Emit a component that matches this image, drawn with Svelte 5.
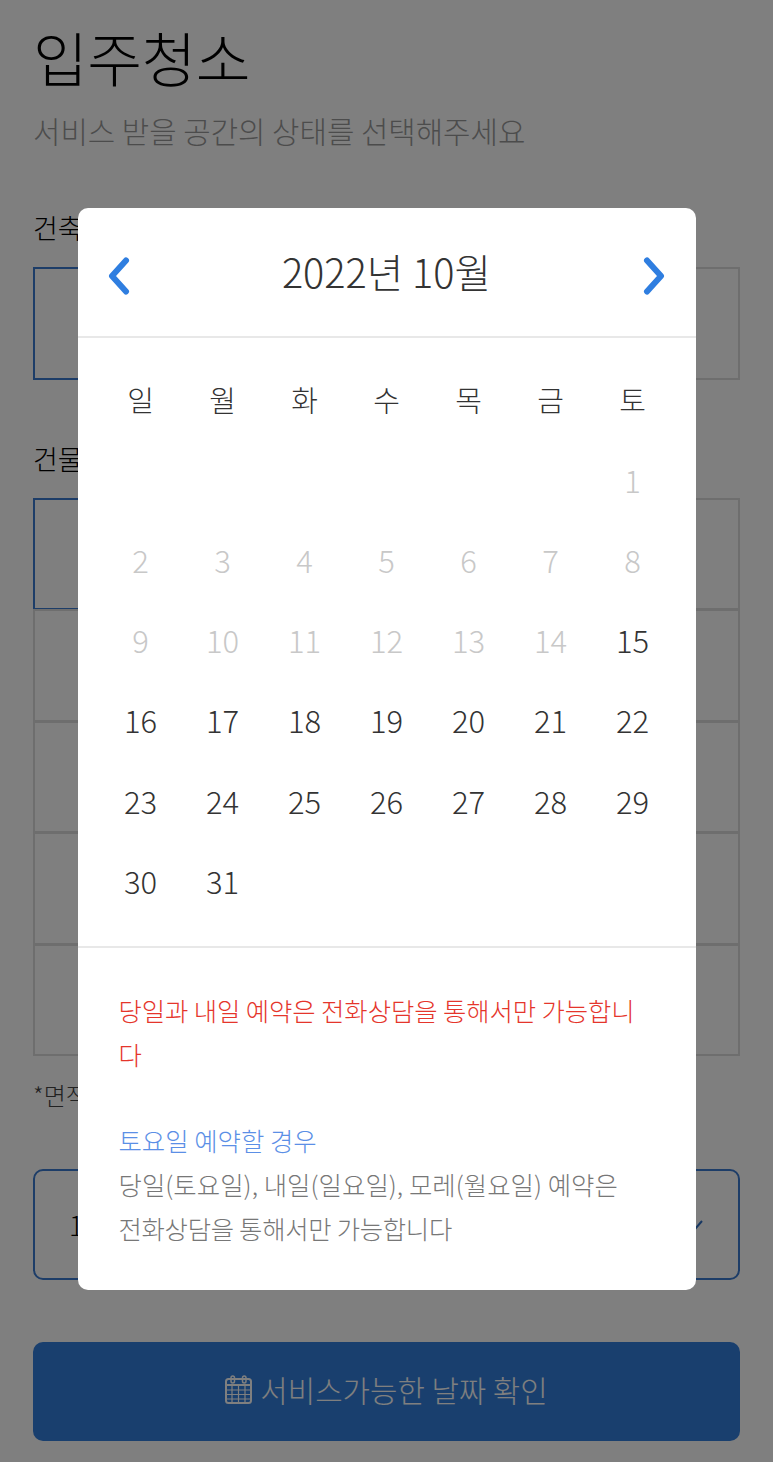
<script>
  const weekdays = ['일', '월', '화', '수', '목', '금', '토'];
  const blanks = Array(6);
  const days = Array.from({ length: 31 }, (_, i) => i + 1);
  const rows = [0, 1, 2, 3, 4];
</script>

<div class="page">
  <h1>입주청소</h1>
  <p class="sub">서비스 받을 공간의 상태를 선택해주세요</p>

  <div class="label first">건축물 유형</div>
  <div class="options single">
    <div class="opt selected">아파트</div>
    <div class="opt">주택</div>
  </div>

  <div class="label second">건물 상태</div>
  <div class="options">
    {#each rows as r}
      <div class="opt" class:selected={r === 0}></div>
      <div class="opt"></div>
    {/each}
  </div>

  <div class="note">*면적은 공급면적 기준입니다</div>

  <div class="select">
    <span>10평</span>
    <svg class="caret" width="16" height="12" viewBox="0 0 16 12"><path d="M2 3l6 7 6-7" fill="none" stroke="#2f6fc4" stroke-width="2"/></svg>
  </div>

  <button class="cta">
    <svg width="27" height="29" viewBox="0 0 27 29">
      <rect x="1" y="4" width="25" height="24" rx="2.500" fill="none" stroke="currentColor" stroke-width="2"/>
      <path d="M1 10h25" stroke="currentColor" stroke-width="2"/>
      <path d="M1 15h25M1 19.500h25M1 24h25M7 10v18M13.500 10v18M20 10v18" stroke="currentColor" stroke-width="1.200"/>
      <rect x="6" y="1" width="3.500" height="7" rx="1.750" fill="none" stroke="currentColor" stroke-width="1.500"/>
      <rect x="17.500" y="1" width="3.500" height="7" rx="1.750" fill="none" stroke="currentColor" stroke-width="1.500"/>
    </svg>
    서비스가능한 날짜 확인
  </button>
</div>

<div class="overlay">
  <div class="modal">
    <header>
      <svg class="nav" width="26" height="38" viewBox="0 0 26 38"><path d="M20 3.500L6 19l14 15.500" fill="none" stroke="#2f7ee0" stroke-width="6" stroke-linecap="round" stroke-linejoin="round"/></svg>
      <span class="month">2022년 10월</span>
      <svg class="nav" width="26" height="38" viewBox="0 0 26 38"><path d="M6 3.500L20 19 6 34.500" fill="none" stroke="#2f7ee0" stroke-width="6" stroke-linecap="round" stroke-linejoin="round"/></svg>
    </header>
    <div class="cal">
      {#each weekdays as w}<div class="cell wd">{w}</div>{/each}
      {#each blanks as _}<div class="cell"></div>{/each}
      {#each days as d}<div class="cell" class:off={d < 15}>{d}</div>{/each}
    </div>
    <div class="info">
      <p class="red">당일과 내일 예약은 전화상담을 통해서만 가능합니다</p>
      <p class="blue">토요일 예약할 경우</p>
      <p class="gray">당일(토요일), 내일(일요일), 모레(월요일) 예약은<br /><span class="tight">전화상담을 통해서만 가능합니다</span></p>
    </div>
  </div>
</div>

<style>
  :global(body) {
    margin: 0;
    background: #fff;
    font-family: "Noto Sans CJK KR", "Noto Sans", sans-serif;
  }
  .page {
    box-sizing: border-box;
    height: 1462px;
    overflow: hidden;
    padding: 0 33px;
    display: flex;
    flex-direction: column;
    color: #000;
  }
  h1 {
    margin: 14px 0 0;
    font-size: 59.500px;
    line-height: 84px;
    font-weight: 300;
    letter-spacing: -0.500px;
  }
  .sub {
    margin: 11px 0 0;
    font-size: 29.800px;
    line-height: 42px;
    font-weight: 300;
    color: #999;
  }
  .label {
    font-size: 27px;
    line-height: 40px;
    font-weight: 300;
  }
  .first { margin-top: 57px; }
  .second { margin-top: 60px; }
  .options {
    margin-top: 19px;
    display: grid;
    grid-template-columns: 1fr 1fr;
    grid-auto-rows: 111.400px;
  }
  .opt {
    box-sizing: border-box;
    border: 2px solid #ddd;
    margin-bottom: -1px;
    display: flex;
    align-items: center;
    justify-content: center;
    font-size: 27px;
    font-weight: 300;
  }
  .opt.selected { border-color: #3a7ad0; }
  .single { grid-auto-rows: 112px; }
  .note {
    margin-top: 21px;
    font-size: 24px;
    line-height: 38px;
    font-weight: 300;
    color: #444;
  }
  .select {
    box-sizing: border-box;
    margin-top: 55px;
    height: 111px;
    border: 2.500px solid #3a7ad0;
    border-radius: 10px;
    padding: 0 34px;
    display: flex;
    align-items: center;
    justify-content: space-between;
    font-size: 27px;
    font-weight: 300;
  }
  .cta {
    margin-top: 62px;
    height: 99px;
    border: 0;
    border-radius: 10px;
    background: #327edc;
    color: #fff;
    font: inherit;
    font-size: 29.800px;
    font-weight: 300;
    display: flex;
    align-items: center;
    justify-content: center;
    gap: 8px;
    padding: 0 0 4px;
  }
  .overlay {
    position: fixed;
    inset: 0;
    background: rgba(0, 0, 0, 0.5);
    display: flex;
    justify-content: center;
    align-items: flex-start;
    padding-top: 208px;
    box-sizing: border-box;
  }
  .modal {
    width: 618px;
    height: 1082px;
    background: #fff;
    border-radius: 10px;
    overflow: hidden;
    color: #333;
  }
  header {
    box-sizing: border-box;
    height: 130px;
    border-bottom: 2px solid #e8e8e8;
    padding: 0 28px;
    display: flex;
    align-items: center;
    justify-content: space-between;
  }
  .nav { margin-top: 8px; }
  .month {
    font-size: 39.700px;
    font-weight: 300;
    margin-bottom: 4px;
  }
  .cal {
    box-sizing: border-box;
    height: 610px;
    padding: 21px 22px 0;
    display: grid;
    grid-template-columns: repeat(7, 1fr);
    grid-auto-rows: 80.200px;
    border-bottom: 2px solid #e8e8e8;
    font-size: 31px;
    font-weight: 300;
  }
  .cell {
    display: flex;
    align-items: center;
    justify-content: center;
  }
  .wd { font-size: 29px; }
  .off { color: #c8c8c8; }
  .info {
    padding: 40px 40px 0 41px;
    font-size: 25.400px;
    line-height: 44px;
    font-weight: 300;
    word-break: break-all;
  }
  .info p { margin: 0; }
  .red { color: #e5352b; letter-spacing: -0.100px; }
  .info .blue { color: #5b8fe6; margin-top: 42px; }
  .gray { color: #777; letter-spacing: 0.050px; }
  .tight { letter-spacing: -0.300px; }
</style>
